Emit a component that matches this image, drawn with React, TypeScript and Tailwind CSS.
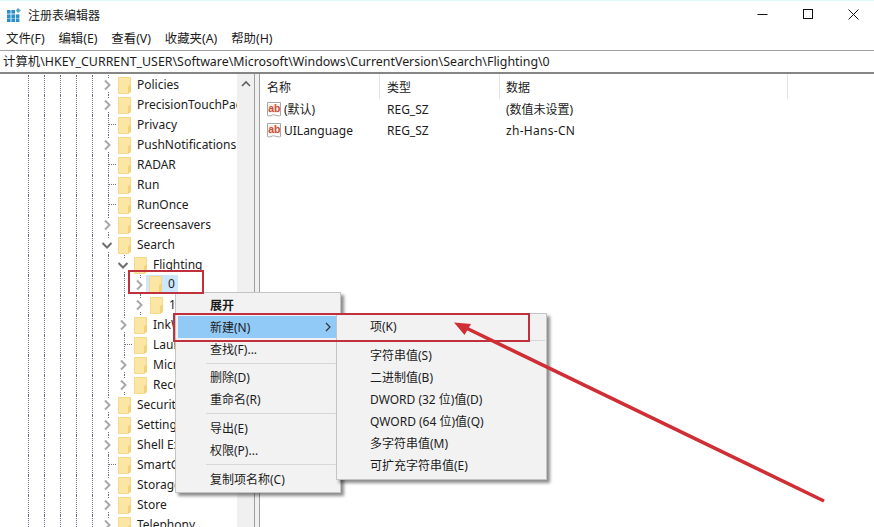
import React from "react";

const FONT = '"Noto Sans", "Noto Sans CJK SC", sans-serif';

type Kind = "closed" | "open" | "leaf";
type Row = { name: string; level: 0 | 1 | 2; kind: Kind; selected?: boolean };

const rows: Row[] = [
  { name: "Policies", level: 0, kind: "closed" },
  { name: "PrecisionTouchPad", level: 0, kind: "closed" },
  { name: "Privacy", level: 0, kind: "leaf" },
  { name: "PushNotifications", level: 0, kind: "closed" },
  { name: "RADAR", level: 0, kind: "leaf" },
  { name: "Run", level: 0, kind: "leaf" },
  { name: "RunOnce", level: 0, kind: "leaf" },
  { name: "Screensavers", level: 0, kind: "closed" },
  { name: "Search", level: 0, kind: "open" },
  { name: "Flighting", level: 1, kind: "open" },
  { name: "0", level: 2, kind: "closed", selected: true },
  { name: "1", level: 2, kind: "closed" },
  { name: "InkWorkspace", level: 1, kind: "closed" },
  { name: "Launch", level: 1, kind: "leaf" },
  { name: "Microsoft", level: 1, kind: "closed" },
  { name: "Recovery", level: 1, kind: "closed" },
  { name: "Security", level: 0, kind: "closed" },
  { name: "Settings", level: 0, kind: "closed" },
  { name: "Shell Extensions", level: 0, kind: "closed" },
  { name: "SmartGlass", level: 0, kind: "leaf" },
  { name: "Storage", level: 0, kind: "closed" },
  { name: "Store", level: 0, kind: "closed" },
  { name: "Telephony", level: 0, kind: "closed" },
];

function Folder() {
  return (
    <svg width="14" height="17" viewBox="0 0 14 17" className="shrink-0">
      <path d="M0.5 0.5H12.5V15L10 16.5H0.5Z" fill="#fce6a3" stroke="#f5d988" />
      <path d="M10 16.5V9L13 7.5V15Z" fill="#f2d27a" />
    </svg>
  );
}

function Guide() {
  return (
    <div className="flex h-5 w-4 shrink-0 justify-center">
      <div className="h-full border-l border-dotted border-gray-500" />
    </div>
  );
}

function Connector({ kind }: { kind: Kind }) {
  if (kind === "leaf") {
    return (
      <div className="flex h-5 w-4 shrink-0 pl-2">
        <div className="h-full w-2 border-l border-dotted border-gray-500">
          <div className="h-1/2 w-[7px] border-b border-dotted border-gray-500" />
        </div>
      </div>
    );
  }
  return (
    <div className="flex h-5 w-4 shrink-0 flex-col items-center justify-between">
      <div className="h-[3px] border-l border-dotted border-gray-500" />
      <svg width="12" height="12" viewBox="0 0 12 12" className="-ml-[2px]">
        {kind === "closed" ? (
          <path d="M4 1.5L8.5 6L4 10.5" fill="none" stroke="#a8a8a8" strokeWidth="2" />
        ) : (
          <path d="M1.5 4L6 8.5L10.5 4" fill="none" stroke="#6e6e6e" strokeWidth="2" />
        )}
      </svg>
      <div className="h-[3px] border-l border-dotted border-gray-500" />
    </div>
  );
}

function TreeRow({ row }: { row: Row }) {
  const guides = 5 + row.level;
  return (
    <div className="flex h-5 items-center pl-5">
      {Array.from({ length: guides }, (_, i) => (
        <Guide key={i} />
      ))}
      <Connector kind={row.kind} />
      <div
        className={
          row.selected
            ? "ml-[-2px] flex h-[18px] items-center gap-[5px] self-start bg-[#cce8ff] pl-[3px] pr-[3px]"
            : "ml-[2px] flex items-center gap-[5px]"
        }
      >
        <Folder />
        <span className="whitespace-nowrap">{row.name}</span>
      </div>
    </div>
  );
}

function AbIcon() {
  return (
    <svg width="16" height="17" viewBox="0 0 16 17" className="shrink-0">
      <path d="M1.5 1.5H14.5V14.5C11 16 9 12.5 5 14.5C3.5 15.2 2.5 15 1.5 14.5Z" fill="#fff" stroke="#a7a7a7" />
      <rect x="2.5" y="3" width="11.5" height="9" fill="#fbeee8" />
      <text x="2.2" y="11" fontSize="10.5" fontWeight="700" fill="#c9503a" fontFamily='"Liberation Sans", sans-serif'>
        ab
      </text>
    </svg>
  );
}

function MenuItem({ label, bold, active, arrow }: { label: string; bold?: boolean; active?: boolean; arrow?: boolean }) {
  return (
    <div className={`flex h-[22px] items-center justify-between pl-[32px] pr-[6px] ${active ? "bg-[#91c9f7]" : ""} ${bold ? "font-bold" : ""}`}>
      <span className="whitespace-nowrap pt-[2px]">{label}</span>
      {arrow && (
        <svg width="8" height="10" viewBox="0 0 8 10">
          <path d="M2 1L6 5L2 9" fill="none" stroke="#333" strokeWidth="1.2" />
        </svg>
      )}
    </div>
  );
}

function Sep({ h = "h-[7px]" }: { h?: string }) {
  return (
    <div className={`flex ${h} items-center pl-[28px]`}>
      <div className="h-px w-full bg-[#d7d7d7]" />
    </div>
  );
}

export default function App() {
  return (
    <div className="relative h-[527px] w-[874px] overflow-hidden bg-white text-[12px] text-[#1c1c1c]" style={{ fontFamily: FONT }}>
      <div className="flex h-[28px] items-center justify-between border-t border-[#e2f8f8] pl-[7px] pr-[15px]">
        <div className="flex items-center gap-[7px]">
          <svg width="14" height="14" viewBox="0 0 14 14">
            <g fill="#2b8fc9">
              <rect x="0" y="2" width="3.6" height="3.6" />
              <rect x="4.4" y="2" width="3.6" height="3.6" />
              <rect x="0" y="6.4" width="3.6" height="3.6" />
              <rect x="4.4" y="6.4" width="3.6" height="3.6" />
              <rect x="8.8" y="6.4" width="3.6" height="3.6" />
              <rect x="0" y="10.4" width="3.6" height="3.6" />
              <rect x="4.4" y="10.4" width="3.6" height="3.6" />
              <rect x="8.8" y="10.4" width="3.6" height="3.6" />
            </g>
            <path d="M11 0L14 2.5L11 5L8.8 2.5Z" fill="#55a9c9" />
          </svg>
          <span className="pt-[3px] text-[12px]">注册表编辑器</span>
        </div>
        <div className="mb-[1px] flex items-center gap-[35px]">
          <svg width="11" height="11" viewBox="0 0 11 11">
            <path d="M0.5 5.5H10.5" stroke="#111" fill="none" />
          </svg>
          <svg width="10" height="10" viewBox="0 0 10 10">
            <rect x="0.5" y="0.5" width="9" height="9" stroke="#111" fill="none" />
          </svg>
          <svg width="11" height="11" viewBox="0 0 11 11">
            <path d="M0.5 0.5L10.5 10.5M10.5 0.5L0.5 10.5" stroke="#111" fill="none" />
          </svg>
        </div>
      </div>

      <div className="flex h-[23px] items-center gap-[13.8px] border-b border-[#a0a0a0] pl-[6px] pt-px text-[12.4px]">
        <span>文件(F)</span>
        <span>编辑(E)</span>
        <span>查看(V)</span>
        <span>收藏夹(A)</span>
        <span>帮助(H)</span>
      </div>

      <div className="flex h-[23px] items-center border-b-2 border-[#858585] pl-[3px] pt-px text-[12.4px]">
        计算机\HKEY_CURRENT_USER\Software\Microsoft\Windows\CurrentVersion\Search\Flighting\0
      </div>

      <div className="flex h-[453px]">
        <div className="w-[237px] shrink-0 overflow-hidden pt-px">
          {rows.map((r) => (
            <TreeRow key={r.name} row={r} />
          ))}
        </div>
        <div className="flex w-[17px] shrink-0 justify-center bg-[#f0f0f0] pt-[6px]">
          <svg width="10" height="8" viewBox="0 0 10 8">
            <path d="M1 6L5 2L9 6" fill="none" stroke="#606060" strokeWidth="1.6" />
          </svg>
        </div>
        <div className="w-[6px] shrink-0 border-x border-[#a0a0a0] bg-[#f0f0f0]" />
        <div className="min-w-0 flex-1">
          <div className="flex h-[25px] items-center">
            <div className="flex h-full w-[120px] items-center border-r border-[#e5e5e5] pl-[7px] pt-[2px]">名称</div>
            <div className="flex h-full w-[120px] items-center border-r border-[#e5e5e5] pl-[7px] pt-[2px]">类型</div>
            <div className="flex h-full w-[288px] items-center border-r border-[#e5e5e5] pl-[6px] pt-[2px]">数据</div>
          </div>
          <div className="flex h-[21px] items-center">
            <div className="flex w-[120px] items-center gap-[2px] pl-[6px]">
              <AbIcon />
              <span>(默认)</span>
            </div>
            <div className="w-[120px] pl-[7px]">REG_SZ</div>
            <div className="pl-[6px]">(数值未设置)</div>
          </div>
          <div className="flex h-[21px] items-center">
            <div className="flex w-[120px] items-center gap-[2px] pl-[6px]">
              <AbIcon />
              <span>UILanguage</span>
            </div>
            <div className="w-[120px] pl-[7px]">REG_SZ</div>
            <div className="pl-[6px] tracking-[0.3px]">zh-Hans-CN</div>
          </div>
        </div>
      </div>

      <div className="absolute left-[175px] top-[292px] h-[201px] w-[166px] border border-[#c4c4c4] bg-[#f2f2f2] px-[2px] pt-px shadow-[3px_3px_3px_rgba(0,0,0,0.45)]">
        <MenuItem label="展开" bold />
        <MenuItem label="新建(N)" active arrow />
        <MenuItem label="查找(F)..." />
        <Sep h="h-[6px]" />
        <MenuItem label="删除(D)" />
        <MenuItem label="重命名(R)" />
        <Sep />
        <MenuItem label="导出(E)" />
        <MenuItem label="权限(P)..." />
        <Sep />
        <MenuItem label="复制项名称(C)" />
      </div>

      <div className="absolute left-[336px] top-[313px] h-[167px] w-[211px] border border-[#c4c4c4] bg-[#f2f2f2] px-px pt-px shadow-[3px_3px_3px_rgba(0,0,0,0.45)]">
        <MenuItem label="项(K)" />
        <Sep />
        <MenuItem label="字符串值(S)" />
        <MenuItem label="二进制值(B)" />
        <MenuItem label="DWORD (32 位)值(D)" />
        <MenuItem label="QWORD (64 位)值(Q)" />
        <MenuItem label="多字符串值(M)" />
        <MenuItem label="可扩充字符串值(E)" />
      </div>

      <div className="absolute left-[128px] top-[270px] h-[24px] w-[76px] border-2 border-[#c0313d]" />
      <div className="absolute left-[173px] top-[313px] h-[29px] w-[357px] border-2 border-[#c0313d]" />

      <svg className="absolute left-0 top-0" width="874" height="527" viewBox="0 0 874 527">
        <path d="M824 501L462 326" stroke="#cf2f34" strokeWidth="3.5" fill="none" />
        <path d="M454 322.5L471 324L464.5 335Z" fill="#cf2f34" />
      </svg>
    </div>
  );
}
